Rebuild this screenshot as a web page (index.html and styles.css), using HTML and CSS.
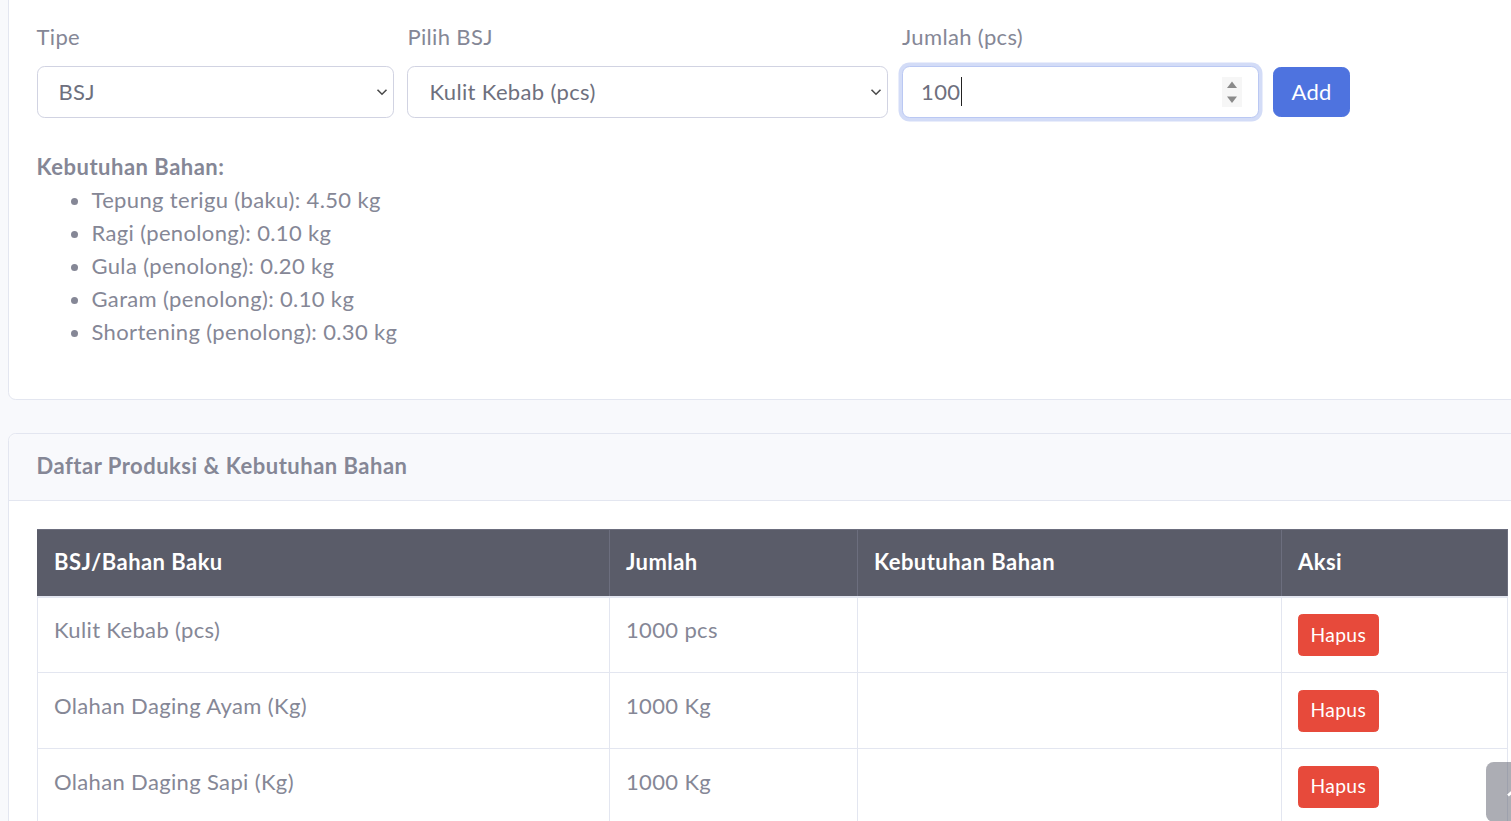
FILE: index.html
```html
<!DOCTYPE html>
<html lang="id">
<head>
<meta charset="utf-8">
<title>Produksi</title>
<link rel="stylesheet" href="styles.css">
</head>
<body>
<div class="page">
  <div class="card card-form">
    <div class="card-body">
      <div class="form-row">
        <div class="col col-3">
          <label class="label">Tipe</label>
          <div class="select"><span>BSJ</span>
            <svg class="chev" width="12" height="8" viewBox="0 0 12 8"><path d="M1.5 1.8 6 6.2 10.5 1.8" fill="none" stroke="#4a4a4a" stroke-width="1.6"/></svg>
          </div>
        </div>
        <div class="col col-4">
          <label class="label">Pilih BSJ</label>
          <div class="select"><span>Kulit Kebab (pcs)</span>
            <svg class="chev" width="12" height="8" viewBox="0 0 12 8"><path d="M1.5 1.8 6 6.2 10.5 1.8" fill="none" stroke="#4a4a4a" stroke-width="1.6"/></svg>
          </div>
        </div>
        <div class="col col-3">
          <label class="label">Jumlah (pcs)</label>
          <div class="input focus"><span class="val">100</span><span class="caret"></span>
            <svg class="spin" width="20" height="30" viewBox="0 0 20 30"><rect x="0" y="0" width="20" height="30" fill="#f6f6f6"/><path d="M10 4.5 15 11 5 11Z" fill="#8a8a8a"/><path d="M10 26 15 19.5 5 19.5Z" fill="#8a8a8a"/></svg>
          </div>
        </div>
        <div class="col col-auto">
          <button class="btn btn-primary">Add</button>
        </div>
      </div>
      <div class="needs">
        <strong class="needs-title">Kebutuhan Bahan:</strong>
        <ul class="needs-list">
          <li>Tepung terigu (baku): 4.50 kg</li>
          <li>Ragi (penolong): 0.10 kg</li>
          <li>Gula (penolong): 0.20 kg</li>
          <li>Garam (penolong): 0.10 kg</li>
          <li>Shortening (penolong): 0.30 kg</li>
        </ul>
      </div>
    </div>
  </div>

  <div class="card">
    <div class="card-header"><h6 class="card-title">Daftar Produksi &amp; Kebutuhan Bahan</h6></div>
    <div class="card-body">
      <table class="table">
        <colgroup><col class="c1"><col class="c2"><col class="c3"><col class="c4"></colgroup>
        <thead>
          <tr><th>BSJ/Bahan Baku</th><th>Jumlah</th><th>Kebutuhan Bahan</th><th>Aksi</th></tr>
        </thead>
        <tbody>
          <tr><td>Kulit Kebab (pcs)</td><td>1000 pcs</td><td></td><td><button class="btn btn-sm btn-danger">Hapus</button></td></tr>
          <tr><td>Olahan Daging Ayam (Kg)</td><td>1000 Kg</td><td></td><td><button class="btn btn-sm btn-danger">Hapus</button></td></tr>
          <tr><td>Olahan Daging Sapi (Kg)</td><td>1000 Kg</td><td></td><td><button class="btn btn-sm btn-danger">Hapus</button></td></tr>
        </tbody>
      </table>
    </div>
  </div>
</div>
<a class="scroll-top" href="#"><svg width="20" height="16" viewBox="0 0 20 16"><path d="M2 11.5 10 4.5 18 11.5" fill="none" stroke="#fff" stroke-width="2.6"/></svg></a>
</body>
</html>
```

FILE: styles.css
```css
html, body {
  margin: 0;
  padding: 0;
  overflow: hidden;
  background: #f8f9fc;
}
body {
  font-family: Lato, "Noto Sans", "Liberation Sans", sans-serif;
  font-size: 22px;
  line-height: 33px;
  letter-spacing: 0.35px;
  color: #858796;
  height: 821px;
  position: relative;
}
.page {
  padding-left: 8px;
  margin-top: -8px;
  width: 1527px;
}
.card {
  width: 1527px;
  box-sizing: border-box;
  background: #fff;
  border: 1px solid #e3e6f0;
  border-radius: 7.7px;
  margin-bottom: 33px;
}
.card-body {
  padding: 27.5px;
}
.form-row {
  display: flex;
  margin: 0 -6.875px 32px;
}
.col {
  padding: 0 6.875px;
  box-sizing: border-box;
  display: flex;
  flex-direction: column;
}
.col-3 { flex: 0 0 25%; }
.col-4 { flex: 0 0 33.3333%; }
.col-auto { flex: 0 0 auto; justify-content: flex-end; }
.label {
  display: block;
  line-height: 31px;
  margin-bottom: 14px;
  color: #858796;
}
.select, .input {
  height: 52px;
  box-sizing: border-box;
  border: 1px solid #d1d3e2;
  border-radius: 7.7px;
  background: #fff;
  display: flex;
  align-items: center;
  color: #6e707e;
  position: relative;
  line-height: 30px;
}
.select {
  padding: 0 5px 0 21px;
  justify-content: space-between;
}
.input {
  padding: 0 16px 0 18px;
}
.input.focus {
  border-color: #bac8f3;
  box-shadow: 0 0 0 3.5px rgba(78, 115, 223, 0.25);
}
.caret {
  display: inline-block;
  width: 1px;
  height: 29px;
  background: #222;
  margin-left: 1px;
}
.spin {
  margin-left: auto;
}
.btn {
  font-family: inherit;
  font-size: 22px;
  line-height: 33px;
  letter-spacing: 0.35px;
  border: 1px solid transparent;
  color: #fff;
  cursor: pointer;
}
.btn-primary {
  background: #4e73df;
  border-color: #4e73df;
  border-radius: 7.7px;
  padding: 7.5px 17.5px;
  margin-bottom: 1px;
}
.btn-sm {
  font-size: 19.25px;
  line-height: 28.9px;
  padding: 5.5px 11.5px;
  border-radius: 4.4px;
}
.btn-danger {
  background: #e74a3b;
  border-color: #e74a3b;
}
.needs-title {
  display: block;
  font-weight: 700;
  letter-spacing: 0.5px;
}
.needs-list {
  margin: 0 0 24px;
  padding-left: 55px;
}
.card-header {
  background: #f8f9fc;
  border-bottom: 1px solid #e3e6f0;
  padding: 15px 27.5px 18px;
  border-radius: 7.7px 7.7px 0 0;
}
.card-title {
  margin: 0;
  font-size: 22px;
  line-height: 33px;
  font-weight: 700;
  letter-spacing: 0.5px;
  color: #858796;
}
.table {
  width: 1470px;
  table-layout: fixed;
  border-collapse: collapse;
  border: 1px solid #e3e6f0;
  color: #858796;
}
.c1 { width: 572px; }
.c2 { width: 248px; }
.c3 { width: 424px; }
.c4 { width: 226px; }
.table th, .table td {
  text-align: left;
  vertical-align: top;
  padding: 16.5px;
  border: 1px solid #e3e6f0;
}
.table thead th {
  background: #5a5c69;
  color: #fff;
  font-weight: 700;
  letter-spacing: 0.45px;
  border-color: #6c6e7e;
  border-bottom: 2px solid #e3e6f0;
  padding-top: 15.5px;
  padding-bottom: 17.5px;
}
.table thead th:first-child { border-left-color: #5a5c69; }
.table td {
  padding-top: 16.5px;
  padding-bottom: 16.5px;
  line-height: 31px;
}
.table td .btn { display: block; }
.scroll-top {
  position: fixed;
  left: 1486px;
  top: 762px;
  width: 60px;
  height: 60px;
  border-radius: 7.7px;
  background: rgba(90, 92, 105, 0.5);
  display: flex;
  align-items: center;
  justify-content: center;
}
```
